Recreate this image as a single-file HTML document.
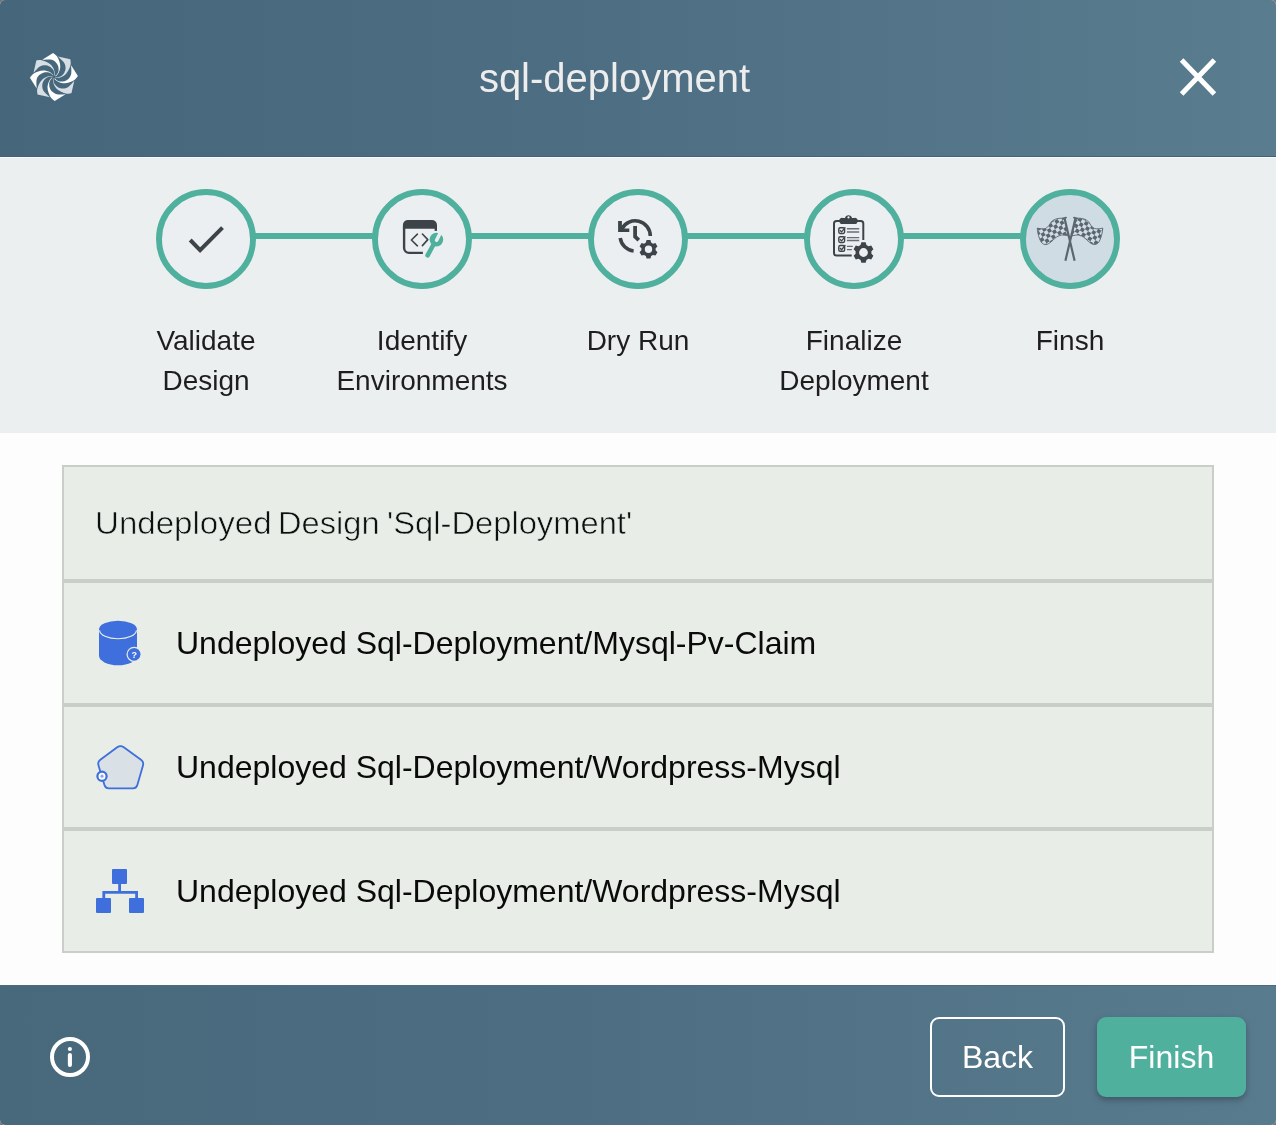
<!DOCTYPE html>
<html><head><meta charset="utf-8">
<style>
*{box-sizing:border-box;margin:0;padding:0}
html,body{width:1276px;height:1125px;overflow:hidden;background:#747474}
body{font-family:"Liberation Sans",sans-serif;position:relative}
.modal{will-change:transform;position:absolute;left:0;top:0;width:1276px;height:1125px;border-radius:5px;overflow:hidden;background:#fdfdfd}
.hdr{position:absolute;left:0;top:0;width:1276px;height:157px;background:linear-gradient(90deg,#46677b 0%,#4d6e82 45%,#5a7c8f 100%)}
.hdr:after{content:"";position:absolute;left:0;right:0;bottom:0;height:1px;background:#43627a}
.title{position:absolute;left:0;width:1229px;top:55px;text-align:center;font-size:40px;line-height:46px;color:#ededed}
.stepper{position:absolute;left:0;top:157px;width:1276px;height:276px;background:#eceff0;border-top:1px solid #f7f8f8}
.circle{position:absolute;width:100px;height:100px;border-radius:50%;border:6px solid #50b09e;background:#ebeff2}
.conn{position:absolute;height:6px;background:#50b09e;top:233px}
.lbl{position:absolute;width:216px;text-align:center;font-size:28px;line-height:40px;color:#1e1e1e;top:321px}
.box{position:absolute;left:62px;top:465px;width:1152px;height:488px;background:#c9cec8}
.row{position:absolute;left:2px;width:1148px;background:#e8ede7}
.rtxt{position:absolute;left:112px;font-size:32px;line-height:37px;color:#0a0a0a;white-space:nowrap}
.w1{transform-origin:0 0;color:#0d1010;-webkit-text-stroke:0.6px #e8ede7}
.ftr{position:absolute;left:0;top:985px;width:1276px;height:140px;background:linear-gradient(90deg,#48687c 0%,#4d6e82 45%,#597b8e 100%)}
.ftr:before{content:"";position:absolute;left:0;right:0;top:0;height:1px;background:#4c6b7f}
.btn{position:absolute;top:1017px;height:80px;border-radius:9px;font-size:32px;color:#fff;text-align:center;line-height:80px}
.back{left:930px;width:135px;border:2px solid #fff;line-height:76px}
.finish{left:1097px;width:149px;background:#50b09e;box-shadow:0 3px 6px rgba(0,0,0,.28);line-height:81px}
.ov{position:absolute;left:0;top:0;overflow:visible}
</style></head><body>
<div class="modal">
  <div class="hdr">
    <div class="title">sql-deployment</div>
  </div>

  <div class="stepper"></div>
  <div class="conn" style="left:250px;width:130px"></div>
  <div class="conn" style="left:466px;width:130px"></div>
  <div class="conn" style="left:682px;width:130px"></div>
  <div class="conn" style="left:898px;width:130px"></div>

  <div class="circle" style="left:156px;top:189px"></div>
  <div class="circle" style="left:372px;top:189px"></div>
  <div class="circle" style="left:588px;top:189px"></div>
  <div class="circle" style="left:804px;top:189px"></div>
  <div class="circle" style="left:1020px;top:189px;background:#cfdce3"></div>

  <div class="lbl" style="left:98px">Validate<br>Design</div>
  <div class="lbl" style="left:314px">Identify<br>Environments</div>
  <div class="lbl" style="left:530px">Dry Run</div>
  <div class="lbl" style="left:746px">Finalize<br>Deployment</div>
  <div class="lbl" style="left:962px">Finsh</div>

  <div class="box">
    <div class="row" style="top:2px;height:112px"><div class="rtxt w1" style="left:31px;top:38px;transform:scaleX(1.034)">Undeployed</div><div class="rtxt w1" style="left:214px;top:38px;transform:scaleX(1.02)">Design</div><div class="rtxt w1" style="left:323px;top:38px;transform:scaleX(1.022)">'Sql-Deployment'</div></div>
    <div class="row" style="top:118px;height:120px"><div class="rtxt" style="top:42px">Undeployed Sql-Deployment/Mysql-Pv-Claim</div></div>
    <div class="row" style="top:242px;height:120px"><div class="rtxt" style="top:42px">Undeployed Sql-Deployment/Wordpress-Mysql</div></div>
    <div class="row" style="top:366px;height:120px"><div class="rtxt" style="top:42px">Undeployed Sql-Deployment/Wordpress-Mysql</div></div>
  </div>

  <div class="ftr"></div>
  <div class="btn back">Back</div>
  <div class="btn finish">Finish</div>
  <svg class="ov" width="1276" height="1125" viewBox="0 0 1276 1125"><path d="M53.06,52.91 C53.69,53.45 55.78,54.72 56.82,56.10 C57.86,57.49 58.73,59.51 59.30,61.20 C59.88,62.90 60.30,64.54 60.29,66.27 C60.27,68.00 59.81,70.06 59.20,71.60 C58.60,73.13 57.42,74.64 56.66,75.49 C55.91,76.35 55.01,76.53 54.68,76.73 L54.59,76.50 C54.99,76.14 56.31,75.25 56.96,74.33 C57.62,73.41 58.32,72.32 58.52,70.99 C58.72,69.66 58.64,67.79 58.17,66.33 C57.70,64.87 56.92,63.34 55.70,62.21 C54.48,61.08 53.08,59.99 50.84,59.57 C48.60,59.14 43.70,59.64 42.27,59.66 Z" fill="#ffffff"/>
<path d="M70.27,59.35 C70.34,60.17 70.91,62.55 70.67,64.26 C70.43,65.97 69.61,68.02 68.82,69.62 C68.03,71.23 67.17,72.69 65.93,73.90 C64.70,75.11 62.91,76.24 61.40,76.90 C59.89,77.56 57.99,77.79 56.85,77.86 C55.71,77.93 54.95,77.42 54.57,77.34 L54.67,77.11 C55.21,77.13 56.77,77.44 57.88,77.25 C59.00,77.06 60.26,76.79 61.34,75.99 C62.43,75.19 63.69,73.81 64.39,72.45 C65.10,71.08 65.63,69.45 65.56,67.79 C65.50,66.13 65.28,64.37 63.99,62.48 C62.71,60.60 58.89,57.48 57.87,56.48 Z" fill="#d7dfe4"/>
<path d="M77.89,76.06 C77.35,76.69 76.08,78.78 74.70,79.82 C73.31,80.86 71.29,81.73 69.60,82.30 C67.90,82.88 66.26,83.30 64.53,83.29 C62.80,83.27 60.74,82.81 59.20,82.20 C57.67,81.60 56.16,80.42 55.31,79.66 C54.45,78.91 54.27,78.01 54.07,77.68 L54.30,77.59 C54.66,77.99 55.55,79.31 56.47,79.96 C57.39,80.62 58.48,81.32 59.81,81.52 C61.14,81.72 63.01,81.64 64.47,81.17 C65.93,80.70 67.46,79.92 68.59,78.70 C69.72,77.48 70.81,76.08 71.23,73.84 C71.66,71.60 71.16,66.70 71.14,65.27 Z" fill="#ffffff"/>
<path d="M71.45,93.27 C70.63,93.34 68.25,93.91 66.54,93.67 C64.83,93.43 62.78,92.61 61.18,91.82 C59.57,91.03 58.11,90.17 56.90,88.93 C55.69,87.70 54.56,85.91 53.90,84.40 C53.24,82.89 53.01,80.99 52.94,79.85 C52.87,78.71 53.38,77.95 53.46,77.57 L53.69,77.67 C53.67,78.21 53.36,79.77 53.55,80.88 C53.74,82.00 54.01,83.26 54.81,84.34 C55.61,85.43 56.99,86.69 58.35,87.39 C59.72,88.10 61.35,88.63 63.01,88.56 C64.67,88.50 66.43,88.28 68.32,86.99 C70.20,85.71 73.32,81.89 74.32,80.87 Z" fill="#d7dfe4"/>
<path d="M54.74,100.89 C54.11,100.35 52.02,99.08 50.98,97.70 C49.94,96.31 49.07,94.29 48.50,92.60 C47.92,90.90 47.50,89.26 47.51,87.53 C47.53,85.80 47.99,83.74 48.60,82.20 C49.20,80.67 50.38,79.16 51.14,78.31 C51.89,77.45 52.79,77.27 53.12,77.07 L53.21,77.30 C52.81,77.66 51.49,78.55 50.84,79.47 C50.18,80.39 49.48,81.48 49.28,82.81 C49.08,84.14 49.16,86.01 49.63,87.47 C50.10,88.93 50.88,90.46 52.10,91.59 C53.32,92.72 54.72,93.81 56.96,94.23 C59.20,94.66 64.10,94.16 65.53,94.14 Z" fill="#ffffff"/>
<path d="M37.53,94.45 C37.46,93.63 36.89,91.25 37.13,89.54 C37.37,87.83 38.19,85.78 38.98,84.18 C39.77,82.57 40.63,81.11 41.87,79.90 C43.10,78.69 44.89,77.56 46.40,76.90 C47.91,76.24 49.81,76.01 50.95,75.94 C52.09,75.87 52.85,76.38 53.23,76.46 L53.13,76.69 C52.59,76.67 51.03,76.36 49.92,76.55 C48.80,76.74 47.54,77.01 46.46,77.81 C45.37,78.61 44.11,79.99 43.41,81.35 C42.70,82.72 42.17,84.35 42.24,86.01 C42.30,87.67 42.52,89.43 43.81,91.32 C45.09,93.20 48.91,96.32 49.93,97.32 Z" fill="#d7dfe4"/>
<path d="M29.91,77.74 C30.45,77.11 31.72,75.02 33.10,73.98 C34.49,72.94 36.51,72.07 38.20,71.50 C39.90,70.92 41.54,70.50 43.27,70.51 C45.00,70.53 47.06,70.99 48.60,71.60 C50.13,72.20 51.64,73.38 52.49,74.14 C53.35,74.89 53.53,75.79 53.73,76.12 L53.50,76.21 C53.14,75.81 52.25,74.49 51.33,73.84 C50.41,73.18 49.32,72.48 47.99,72.28 C46.66,72.08 44.79,72.16 43.33,72.63 C41.87,73.10 40.34,73.88 39.21,75.10 C38.08,76.32 36.99,77.72 36.57,79.96 C36.14,82.20 36.64,87.10 36.66,88.53 Z" fill="#ffffff"/>
<path d="M36.35,60.53 C37.17,60.46 39.55,59.89 41.26,60.13 C42.97,60.37 45.02,61.19 46.62,61.98 C48.23,62.77 49.69,63.63 50.90,64.87 C52.11,66.10 53.24,67.89 53.90,69.40 C54.56,70.91 54.79,72.81 54.86,73.95 C54.93,75.09 54.42,75.85 54.34,76.23 L54.11,76.13 C54.13,75.59 54.44,74.03 54.25,72.92 C54.06,71.80 53.79,70.54 52.99,69.46 C52.19,68.37 50.81,67.11 49.45,66.41 C48.08,65.70 46.45,65.17 44.79,65.24 C43.13,65.30 41.37,65.52 39.48,66.81 C37.60,68.09 34.48,71.91 33.48,72.93 Z" fill="#d7dfe4"/><circle cx="53.9" cy="76.9" r="1.6" fill="#476779"/><path d="M1181.6,60 L1214.4,94 M1214.4,60 L1181.6,94" stroke="#fff" stroke-width="5"/><path d="M190.2,240 L200.1,250.1 L222.5,227.7" fill="none" stroke="#3d4449" stroke-width="4"/><g transform="translate(392,208)">
<path d="M10.9,20.8 V17 A5,5 0 0 1 15.9,12 H40 A5,5 0 0 1 45,17 V20.8 Z" fill="#3d4449"/>
<path d="M12.1,19 V40 A5,5 0 0 0 17.1,44.9 H30.9" fill="none" stroke="#3d4449" stroke-width="2.4"/>
<path d="M43.8,19 V22.9" fill="none" stroke="#3d4449" stroke-width="2.4"/>
<path d="M25.4,26.2 L19.4,32 L25.4,37.8 M30.4,26 L35.8,31.6 L30.4,37.6" fill="none" stroke="#3d4449" stroke-width="1.6" stroke-linecap="round" stroke-linejoin="round"/>
<path d="M35.6,47.3 L41,37.5" stroke="#50b09e" stroke-width="4.6" stroke-linecap="round"/>
<circle cx="44.4" cy="31.6" r="6.8" fill="#50b09e"/>
<path d="M44.6,32.2 L48.6,24.2" stroke="#ebeff2" stroke-width="3.6" stroke-linecap="round"/>
</g><g transform="translate(608,208)">
<path d="M13.87,20.81 A15.1,15.1 0 0 1 42.30,27.90" fill="none" stroke="#3d4449" stroke-width="3.6"/>
<path d="M12.25,30.00 A15.1,15.1 0 0 0 25.62,42.92" fill="none" stroke="#3d4449" stroke-width="3.6"/>
<path d="M10.1,13 H13.9 V20.5 H21.3 V24 H10.1 Z" fill="#3d4449"/>
<path d="M27.1,18.1 V28.6 L30.8,32.2" fill="none" stroke="#3d4449" stroke-width="3.8"/>
<path d="M37.85,34.61 L38.55,32.11 L42.45,32.11 L43.15,34.61 L44.97,35.66 L47.49,35.01 L49.44,38.40 L47.62,40.25 L47.62,42.35 L49.44,44.20 L47.49,47.59 L44.97,46.94 L43.15,47.99 L42.45,50.49 L38.55,50.49 L37.85,47.99 L36.03,46.94 L33.51,47.59 L31.56,44.20 L33.38,42.35 L33.38,40.25 L31.56,38.40 L33.51,35.01 L36.03,35.66Z M44.2,41.3 A3.7,3.7 0 1 0 36.8,41.3 A3.7,3.7 0 1 0 44.2,41.3Z" fill="#3d4449" fill-rule="evenodd"/>
</g><g transform="translate(824,208)">
<path d="M16.5,13 H12.5 A2.5,2.5 0 0 0 10,15.5 V45 A2.5,2.5 0 0 0 12.5,47.5 H27.7" fill="none" stroke="#3d4449" stroke-width="2"/>
<path d="M32.5,13 H36.8 A2.5,2.5 0 0 1 39.3,15.5 V32" fill="none" stroke="#3d4449" stroke-width="2"/>
<path d="M16,15 A3,3 0 0 1 19,10 H21 A3.6,3.6 0 0 1 28,10 H30 A3,3 0 0 1 33,15 A1.5,1.5 0 0 1 31.5,16 H17.5 A1.5,1.5 0 0 1 16,15Z" fill="#3d4449"/>
<circle cx="24.5" cy="9.4" r="1.1" fill="#ebeff2"/>
<rect x="14.8" y="19.7" width="5.8" height="5.8" rx="1.4" fill="none" stroke="#3d4449" stroke-width="1.4"/>
<path d="M15.9,22.2 L17.6,23.9 L21.4,19.3" fill="none" stroke="#3d4449" stroke-width="1.3"/><rect x="14.8" y="28.7" width="5.8" height="5.8" rx="1.4" fill="none" stroke="#3d4449" stroke-width="1.4"/>
<path d="M15.9,31.2 L17.6,32.9 L21.4,28.3" fill="none" stroke="#3d4449" stroke-width="1.3"/><rect x="14.8" y="37.5" width="5.8" height="5.8" rx="1.4" fill="none" stroke="#3d4449" stroke-width="1.4"/>
<path d="M15.9,40.0 L17.6,41.699999999999996 L21.4,37.099999999999994" fill="none" stroke="#3d4449" stroke-width="1.3"/>
<path d="M22.9,20.8 H35.2 M22.9,24 H35.2 M22.9,29.6 H35.2 M22.9,32.5 H35.2 M22.9,38.4 H28.8 M22.9,41.6 H27.9" stroke="#3d4449" stroke-width="1.4" opacity="0.75"/>
<path d="M36.56,37.06 L37.34,34.33 L41.66,34.33 L42.44,37.06 L44.47,38.23 L47.23,37.54 L49.39,41.29 L47.41,43.33 L47.41,45.67 L49.39,47.71 L47.23,51.46 L44.47,50.77 L42.44,51.94 L41.66,54.67 L37.34,54.67 L36.56,51.94 L34.53,50.77 L31.77,51.46 L29.61,47.71 L31.59,45.67 L31.59,43.33 L29.61,41.29 L31.77,37.54 L34.53,38.23Z M43.9,44.5 A4.4,4.4 0 1 0 35.1,44.5 A4.4,4.4 0 1 0 43.9,44.5Z" fill="#3d4449" fill-rule="evenodd"/>
</g><g transform="translate(1030,208)">
<defs>
<pattern id="chkL" width="7.4" height="7.4" patternUnits="userSpaceOnUse" patternTransform="translate(20,20) rotate(-32)">
<rect width="7.4" height="7.4" fill="#5b6670"/><rect width="3.7" height="3.7" fill="#cfdce3"/><rect x="3.7" y="3.7" width="3.7" height="3.7" fill="#cfdce3"/>
</pattern>
<pattern id="chkR" width="7.4" height="7.4" patternUnits="userSpaceOnUse" patternTransform="translate(60,20) rotate(32)">
<rect width="7.4" height="7.4" fill="#5b6670"/><rect width="3.7" height="3.7" fill="#cfdce3"/><rect x="3.7" y="3.7" width="3.7" height="3.7" fill="#cfdce3"/>
</pattern>
</defs>
<path d="M34.4,10.4 C30,9.8 24,10.5 21,14.3 C19.5,16.5 18.6,19 15.5,20.5 C12.5,21.3 9.5,20.6 7.2,20.1 C7.6,25 9,30.5 11,33.8 C12.5,36 14.5,37 16.8,36.4 C19.5,35.5 21.5,33.5 23.2,32 C25,30 27,28.2 31.2,27.1 C33,26.8 35.5,27.3 38,27.8 Z" fill="url(#chkL)" stroke="#5b6670" stroke-width="0.9"/>
<path d="M 45.6,10.4 C 50.0,9.8 56.0,10.5 59.0,14.3 C 60.5,16.5 61.4,19 64.5,20.5 C 67.5,21.3 70.5,20.6 72.8,20.1 C 72.4,25 71.0,30.5 69.0,33.8 C 67.5,36 65.5,37 63.2,36.4 C 60.5,35.5 58.5,33.5 56.8,32 C 55.0,30 53.0,28.2 48.8,27.1 C 47.0,26.8 44.5,27.3 42.0,27.8 Z" fill="url(#chkR)" stroke="#5b6670" stroke-width="0.9"/>
<path d="M34.6,10.5 L44.6,52.7 M45.4,10.5 L35.4,52.7" stroke="#5b6670" stroke-width="2.2"/>
<path d="M32.8,10.6 L36,9.6 M44,9.6 L47.2,10.6" stroke="#5b6670" stroke-width="1.8" stroke-linecap="round"/>
</g>
<path d="M99,629.5 A19,8.8 0 0 1 137,629.5 V655.6 A19,9.6 0 0 1 99,655.6 Z" fill="#3f6fdc"/>
<path d="M99.6,630.2 A18.4,8.6 0 0 0 136.4,630.2" fill="none" stroke="#e8ede7" stroke-width="1.1"/>
<circle cx="134.1" cy="654.3" r="7.6" fill="#e8ede7"/>
<circle cx="134.1" cy="654.3" r="6.4" fill="#3f6fdc"/>
<text x="134.2" y="657.6" font-family="Liberation Sans" font-size="9" font-weight="bold" fill="#fff" text-anchor="middle">?</text>

<path d="M117.2,747.3 Q120.5,744.9 123.8,747.3 L141,759.8 Q144,762 143,765.5 L137.2,785.4 Q136.2,788.3 133,788.3 H108.8 Q105.6,788.3 104.6,785.4 L98.5,765.5 Q97.4,762 100.3,759.8 Z" fill="#d9e0e6" stroke="#3f6fdc" stroke-width="1.8"/>
<circle cx="102" cy="776.2" r="4.6" fill="#fff" stroke="#3f6fdc" stroke-width="2.2"/>
<circle cx="102" cy="776.2" r="1.6" fill="#3f6fdc" opacity="0.6"/>

<rect x="112" y="869" width="15" height="15" rx="1" fill="#3f6fdc"/>
<rect x="96" y="898" width="15" height="15" rx="1" fill="#3f6fdc"/>
<rect x="129" y="898" width="15" height="15" rx="1" fill="#3f6fdc"/>
<path d="M119.6,884 V892.3 M103.8,898 V892.3 H136.6 V898" fill="none" stroke="#3f6fdc" stroke-width="2.8"/>

<circle cx="70" cy="1057" r="18" fill="none" stroke="#fff" stroke-width="4"/>
<circle cx="69.9" cy="1049" r="2.1" fill="#fff"/>
<path d="M69.9,1055 V1065" stroke="#fff" stroke-width="4.1" stroke-linecap="round"/>
</svg>
</div>
</body></html>
